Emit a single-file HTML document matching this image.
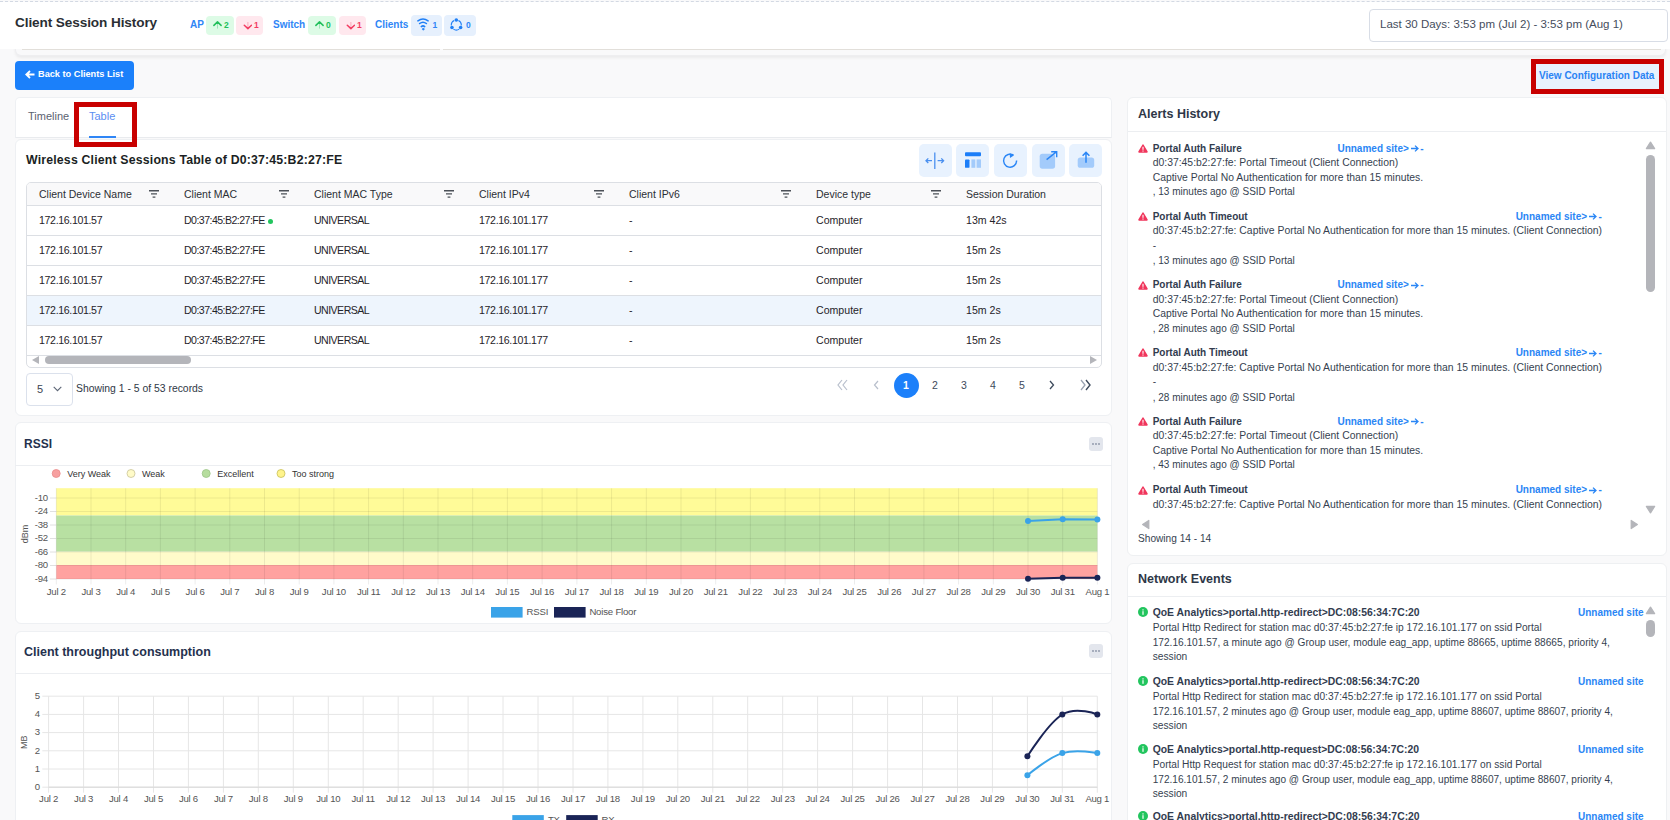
<!DOCTYPE html>
<html><head><meta charset="utf-8">
<style>
*{box-sizing:border-box;margin:0;padding:0}
html,body{width:1670px;height:820px;overflow:hidden}
body{background:#f9f9fa;font-family:"Liberation Sans",sans-serif;color:#212529;position:relative}
.a{position:absolute;white-space:nowrap}
.card{position:absolute;background:#fff;border-radius:6px;border:1px solid #eef0f3}
#topdash{left:0;top:1px;width:1670px;height:0;border-top:1px dashed #d3d9e3}
#hdr{left:0;top:2px;width:1670px;height:47px;background:#fff}
#hdrcard{left:15px;top:40px;width:1651px;height:15.5px;background:#f9f9fa;border:1px solid #eeeef0;border-top:none;border-radius:0 0 6px 6px;box-shadow:0 2px 3px rgba(0,0,0,.06)}
#hdrline{left:22px;top:49px;width:1639px;height:1px;background:#e2dfda}
.ttl{left:15px;top:15px;font-size:13.6px;line-height:16px;font-weight:bold;color:#2a2e33;letter-spacing:-0.1px}
.lbl{font-size:10px;font-weight:bold;color:#2f86f6;line-height:12px;margin-top:1.3px}
.bdg{position:absolute;height:19px;border-radius:4px;font-size:8.5px;font-weight:bold;line-height:19px}
.bg{background:#ddfbe6;color:#22bf5b}
.br{background:#ffe8ee;color:#f23d62}
.bb{background:#e6f0fd;color:#2f86f6;height:21px;line-height:21px}
.bdg svg{position:absolute}
.bdg span{position:absolute}
#date{left:1369px;top:9px;width:299px;height:33px;border:1px solid #d8dde6;border-radius:4px;background:#fff;font-size:11.5px;line-height:28px;padding-left:10px;color:#454d5c}
#back{left:15px;top:61px;width:119px;height:29px;background:#1b80fa;border-radius:4px;color:#fff;font-size:9.2px;font-weight:bold;line-height:27px}
#vcfg{left:1531px;top:59px;width:133px;height:35px;border:5px solid #c80000;background:#e8f1fd;color:#2a83f4;font-size:10px;font-weight:bold;line-height:23px;padding-left:3px}
.th{font-size:10.5px;line-height:13px;color:#2b2f35}
.td{font-size:10.6px;line-height:13px;color:#1f2329}
.cht{font-size:12px;line-height:15px;font-weight:bold;color:#25314e}
.dots{width:14px;height:14px;background:#e3e6ed;border-radius:3px}
.dots svg{position:absolute;left:0;top:0}
.rct{font-size:12.5px;line-height:15px;font-weight:bold;color:#2e3747}
.atl{font-size:10px;line-height:14px;font-weight:bold;color:#323c4f}
.alk{font-size:10px;line-height:14px;font-weight:bold;color:#2a86f5}
.atx{font-size:10.2px;line-height:14px;color:#363f50}
.rc{border:1px solid #eef0f2;box-shadow:none}
#redtab{left:74px;top:102px;width:63px;height:45px;border:5px solid #c80000;z-index:10}
</style></head>
<body>
<div id="hdrcard" class="a"></div>
<div id="hdr" class="a"></div>
<div id="hdrline" class="a"></div><div class="a" style="left:440px;top:49px;width:3px;height:2px;background:#fafafb"></div>
<div id="topdash" class="a"></div>
<div class="a ttl">Client Session History</div>

<div class="a lbl" style="left:190px;top:18px">AP</div>
<div class="bdg bg" style="left:206px;top:16px;width:28px"><svg style="left:7px;top:5px" width="9" height="9" viewBox="0 0 9 9"><path d="M4.5 1.5V7.6" stroke="#22bf5b" stroke-opacity="0.35" stroke-width="1" fill="none"/><path d="M0.9 4.4L4.5 0.9L8.1 4.4" stroke="#22bf5b" stroke-width="1.5" fill="none" stroke-linecap="round" stroke-linejoin="round"/></svg><span style="left:18px">2</span></div>
<div class="bdg br" style="left:236px;top:16px;width:27px"><svg style="left:7px;top:6px" width="9" height="9" viewBox="0 0 9 9"><path d="M4.9 0V6" stroke="#f23d62" stroke-opacity="0.35" stroke-width="1" fill="none"/><path d="M1.3 3.2L4.9 6.6L8.5 3.2" stroke="#f23d62" stroke-width="1.5" fill="none" stroke-linecap="round" stroke-linejoin="round"/></svg><span style="left:18px">1</span></div>
<div class="a lbl" style="left:273px;top:18px">Switch</div>
<div class="bdg bg" style="left:308px;top:16px;width:28px"><svg style="left:7px;top:5px" width="9" height="9" viewBox="0 0 9 9"><path d="M4.5 1.5V7.6" stroke="#22bf5b" stroke-opacity="0.35" stroke-width="1" fill="none"/><path d="M0.9 4.4L4.5 0.9L8.1 4.4" stroke="#22bf5b" stroke-width="1.5" fill="none" stroke-linecap="round" stroke-linejoin="round"/></svg><span style="left:18px">0</span></div>
<div class="bdg br" style="left:339px;top:16px;width:27px"><svg style="left:7px;top:6px" width="9" height="9" viewBox="0 0 9 9"><path d="M4.9 0V6" stroke="#f23d62" stroke-opacity="0.35" stroke-width="1" fill="none"/><path d="M1.3 3.2L4.9 6.6L8.5 3.2" stroke="#f23d62" stroke-width="1.5" fill="none" stroke-linecap="round" stroke-linejoin="round"/></svg><span style="left:18px">1</span></div>
<div class="a lbl" style="left:375px;top:18px">Clients</div>
<div class="bdg bb" style="left:411px;top:15px;width:31px"><svg style="left:6px;top:3px" width="12" height="14" viewBox="0 0 12 14"><path d="M0.9 2.9Q6 -0.8 11.1 2.9M2.6 5.5Q6 2.8 9.4 5.5M4.3 8.6Q6 7.1 7.7 8.6" stroke="#1f7ff6" stroke-width="1.5" fill="none" stroke-linecap="round"/><path d="M6.3 9.9L7.5 11.1L6.3 12.3L5.1 11.1Z" fill="#1f7ff6" stroke="#1f7ff6" stroke-width="0.6" stroke-linejoin="round"/></svg><span style="left:21.5px">1</span></div>
<div class="bdg bb" style="left:444px;top:15px;width:32px"><svg style="left:5px;top:0px" width="15" height="16" viewBox="0 0 15 16"><path d="M2.32 10.44A5 5 0 0 1 5.19 5.47M9.41 5.47A5 5 0 0 1 12.28 10.44M10.17 14.1A5 5 0 0 1 4.43 14.1" stroke="#1f7ff6" stroke-width="1.1" fill="none"/><circle cx="7.3" cy="5" r="1.8" fill="#1f7ff6"/><circle cx="2.97" cy="12.5" r="1.8" fill="#1f7ff6"/><circle cx="11.63" cy="12.5" r="1.8" fill="#1f7ff6"/></svg><span style="left:22px">0</span></div>

<div id="date" class="a">Last 30 Days: 3:53 pm (Jul 2) - 3:53 pm (Aug 1)</div>

<div id="back" class="a"><svg style="position:absolute;left:10px;top:9px" width="10" height="9" viewBox="0 0 10 9"><path d="M5 1L1.3 4.5L5 8M1.5 4.5H9.5" stroke="#fff" stroke-width="1.8" fill="none"/></svg><span style="position:absolute;left:23px">Back to Clients List</span></div>
<div id="vcfg" class="a">View Configuration Data</div>

<!-- TABS -->
<div class="card" style="left:15px;top:97px;width:1097px;height:41px;border-radius:5px 5px 0 0;border-bottom:1px solid #e9ebee"></div>
<div class="a" style="left:28px;top:110px;font-size:11px;line-height:12px;color:#5b6270">Timeline</div>
<div class="a" style="left:89px;top:110px;font-size:11px;line-height:12px;color:#5b8ef2">Table</div>
<div class="a" style="left:89px;top:136px;width:27px;height:2px;background:#2f86f6"></div>
<div id="redtab" class="a"></div>

<!--TABLECARD-->
<div class="card" style="left:15px;top:139px;width:1097px;height:277px"></div>
<div class="a" style="left:26px;top:153px;font-size:12.3px;line-height:15px;font-weight:bold;color:#1b1f24;letter-spacing:0.18px">Wireless Client Sessions Table of D0:37:45:B2:27:FE</div>
<div class="a" style="left:919px;top:144px;width:33px;height:33px;background:#e8f2fe;border-radius:5px"><svg style="position:absolute;left:6px;top:6px" width="20" height="20" viewBox="0 0 20 20"><path d="M9.8 2.6V18.9" stroke="#4a90f0" stroke-width="1.3"/><path d="M1 10.7H7M3.3 8.4L1 10.7L3.3 13M12.6 10.7H18.6M16.3 8.4L18.6 10.7L16.3 13" stroke="#4a90f0" stroke-width="1.3" fill="none"/></svg></div>
<div class="a" style="left:956px;top:144px;width:33px;height:33px;background:#e8f2fe;border-radius:5px"><svg style="position:absolute;left:6px;top:6px" width="20" height="20" viewBox="0 0 20 20"><rect x="3" y="2.3" width="16" height="3.9" rx="0.9" fill="#1c7ef8"/><rect x="3" y="9.4" width="4.5" height="8.4" rx="0.9" fill="#1c7ef8"/><rect x="9.4" y="9.4" width="3.9" height="8.4" fill="#a3cbfb"/><rect x="14.6" y="9.4" width="4.4" height="8.4" fill="#a3cbfb"/></svg></div>
<div class="a" style="left:994px;top:144px;width:33px;height:33px;background:#e8f2fe;border-radius:5px"><svg style="position:absolute;left:6px;top:6px" width="20" height="20" viewBox="0 0 20 20"><path d="M13.6 5.2A6.5 6.5 0 1 0 16.6 10.6" stroke="#2a86f6" stroke-width="1.4" fill="none"/><path d="M9.6 3L13.8 5.4L10 8.1Z" fill="#2a86f6"/></svg></div>
<div class="a" style="left:1032px;top:144px;width:33px;height:33px;background:#e8f2fe;border-radius:5px"><svg style="position:absolute;left:6px;top:6px" width="20" height="20" viewBox="0 0 20 20"><rect x="1.7" y="3.7" width="15.4" height="15" rx="2.6" fill="#a3cbfb"/><path d="M8.6 9.6L18.4 1.9M13.2 1.7H18.7V7.2" stroke="#2a86f6" stroke-width="1.4" fill="none"/></svg></div>
<div class="a" style="left:1069px;top:144px;width:33px;height:33px;background:#e8f2fe;border-radius:5px"><svg style="position:absolute;left:6px;top:6px" width="20" height="20" viewBox="0 0 20 20"><rect x="2.7" y="7.5" width="16.5" height="10.3" rx="2.6" fill="#a3cbfb"/><path d="M11 12.8V2.6M7.6 5.8L11 2.4L14.4 5.8" stroke="#2a86f6" stroke-width="1.5" fill="none"/></svg></div>
<div class="a" style="left:26px;top:182px;width:1076px;height:186px;border:1px solid #dcdfe4;border-radius:5px;overflow:hidden;background:#fff">
<div style="position:absolute;left:0;top:0;width:1076px;height:23px;background:#f9f9fa;border-bottom:1px solid #dcdfe4"></div>
<div style="position:absolute;left:0;top:23px;width:1076px;height:30px;background:#fff;border-bottom:1px solid #dcdfe4"></div>
<div style="position:absolute;left:0;top:53px;width:1076px;height:30px;background:#fff;border-bottom:1px solid #dcdfe4"></div>
<div style="position:absolute;left:0;top:83px;width:1076px;height:30px;background:#fff;border-bottom:1px solid #dcdfe4"></div>
<div style="position:absolute;left:0;top:113px;width:1076px;height:30px;background:#eef5fd;border-bottom:1px solid #dcdfe4"></div>
<div style="position:absolute;left:0;top:143px;width:1076px;height:30px;background:#fff;border-bottom:1px solid #dcdfe4"></div>
</div>
<div class="a th" style="left:39px;top:188px">Client Device Name</div>
<div class="a th" style="left:184px;top:188px">Client MAC</div>
<div class="a th" style="left:314px;top:188px">Client MAC Type</div>
<div class="a th" style="left:479px;top:188px">Client IPv4</div>
<div class="a th" style="left:629px;top:188px">Client IPv6</div>
<div class="a th" style="left:816px;top:188px">Device type</div>
<div class="a th" style="left:966px;top:188px">Session Duration</div>
<svg class="a" style="left:149px;top:190px" width="10" height="8" viewBox="0 0 10 8"><path d="M0 0.75H10M2 3.9H8M3.6 7.1H6.4" stroke="#4b5057" stroke-width="1.4"/></svg>
<svg class="a" style="left:279px;top:190px" width="10" height="8" viewBox="0 0 10 8"><path d="M0 0.75H10M2 3.9H8M3.6 7.1H6.4" stroke="#4b5057" stroke-width="1.4"/></svg>
<svg class="a" style="left:444px;top:190px" width="10" height="8" viewBox="0 0 10 8"><path d="M0 0.75H10M2 3.9H8M3.6 7.1H6.4" stroke="#4b5057" stroke-width="1.4"/></svg>
<svg class="a" style="left:594px;top:190px" width="10" height="8" viewBox="0 0 10 8"><path d="M0 0.75H10M2 3.9H8M3.6 7.1H6.4" stroke="#4b5057" stroke-width="1.4"/></svg>
<svg class="a" style="left:781px;top:190px" width="10" height="8" viewBox="0 0 10 8"><path d="M0 0.75H10M2 3.9H8M3.6 7.1H6.4" stroke="#4b5057" stroke-width="1.4"/></svg>
<svg class="a" style="left:931px;top:190px" width="10" height="8" viewBox="0 0 10 8"><path d="M0 0.75H10M2 3.9H8M3.6 7.1H6.4" stroke="#4b5057" stroke-width="1.4"/></svg>
<div class="a td" style="left:39px;top:214px;letter-spacing:-0.35px;">172.16.101.57</div>
<div class="a td" style="left:184px;top:214px;letter-spacing:-0.55px;">D0:37:45:B2:27:FE</div>
<div class="a td" style="left:314px;top:214px;letter-spacing:-0.55px;">UNIVERSAL</div>
<div class="a td" style="left:479px;top:214px;letter-spacing:-0.35px;">172.16.101.177</div>
<div class="a td" style="left:629px;top:214px;">-</div>
<div class="a td" style="left:816px;top:214px;">Computer</div>
<div class="a td" style="left:966px;top:214px;">13m 42s</div>
<div class="a td" style="left:39px;top:244px;letter-spacing:-0.35px;">172.16.101.57</div>
<div class="a td" style="left:184px;top:244px;letter-spacing:-0.55px;">D0:37:45:B2:27:FE</div>
<div class="a td" style="left:314px;top:244px;letter-spacing:-0.55px;">UNIVERSAL</div>
<div class="a td" style="left:479px;top:244px;letter-spacing:-0.35px;">172.16.101.177</div>
<div class="a td" style="left:629px;top:244px;">-</div>
<div class="a td" style="left:816px;top:244px;">Computer</div>
<div class="a td" style="left:966px;top:244px;">15m 2s</div>
<div class="a td" style="left:39px;top:274px;letter-spacing:-0.35px;">172.16.101.57</div>
<div class="a td" style="left:184px;top:274px;letter-spacing:-0.55px;">D0:37:45:B2:27:FE</div>
<div class="a td" style="left:314px;top:274px;letter-spacing:-0.55px;">UNIVERSAL</div>
<div class="a td" style="left:479px;top:274px;letter-spacing:-0.35px;">172.16.101.177</div>
<div class="a td" style="left:629px;top:274px;">-</div>
<div class="a td" style="left:816px;top:274px;">Computer</div>
<div class="a td" style="left:966px;top:274px;">15m 2s</div>
<div class="a td" style="left:39px;top:304px;letter-spacing:-0.35px;">172.16.101.57</div>
<div class="a td" style="left:184px;top:304px;letter-spacing:-0.55px;">D0:37:45:B2:27:FE</div>
<div class="a td" style="left:314px;top:304px;letter-spacing:-0.55px;">UNIVERSAL</div>
<div class="a td" style="left:479px;top:304px;letter-spacing:-0.35px;">172.16.101.177</div>
<div class="a td" style="left:629px;top:304px;">-</div>
<div class="a td" style="left:816px;top:304px;">Computer</div>
<div class="a td" style="left:966px;top:304px;">15m 2s</div>
<div class="a td" style="left:39px;top:334px;letter-spacing:-0.35px;">172.16.101.57</div>
<div class="a td" style="left:184px;top:334px;letter-spacing:-0.55px;">D0:37:45:B2:27:FE</div>
<div class="a td" style="left:314px;top:334px;letter-spacing:-0.55px;">UNIVERSAL</div>
<div class="a td" style="left:479px;top:334px;letter-spacing:-0.35px;">172.16.101.177</div>
<div class="a td" style="left:629px;top:334px;">-</div>
<div class="a td" style="left:816px;top:334px;">Computer</div>
<div class="a td" style="left:966px;top:334px;">15m 2s</div>
<div class="a" style="left:268px;top:218.5px;width:5px;height:5px;border-radius:50%;background:#22c55e"></div>
<div class="a" style="left:45px;top:356px;width:146px;height:8px;border-radius:4px;background:#b4b5ba"></div>
<svg class="a" style="left:31px;top:355px" width="9" height="10" viewBox="0 0 9 10"><path d="M1 5L8 1V9Z" fill="#b4b5ba"/></svg>
<svg class="a" style="left:1089px;top:355px" width="9" height="10" viewBox="0 0 9 10"><path d="M8 5L1 1V9Z" fill="#b4b5ba"/></svg>
<div class="a" style="left:26px;top:373px;width:47px;height:33px;border:1px solid #dbe1ec;border-radius:4px;background:#fff"></div>
<div class="a" style="left:37px;top:383px;font-size:11px;line-height:13px;color:#3b4452">5</div>
<svg class="a" style="left:53px;top:386px" width="9" height="6" viewBox="0 0 9 6"><path d="M0.7 0.8L4.5 4.6L8.3 0.8" stroke="#5d6676" stroke-width="1.1" fill="none"/></svg>
<div class="a" style="left:76px;top:382px;font-size:10.4px;line-height:13px;color:#2f3846">Showing 1 - 5 of 53 records</div>
<div class="a" style="left:894px;top:373px;width:25px;height:25px;border-radius:50%;background:#1c80fa"></div>
<div class="a" style="left:896px;top:379px;width:20px;text-align:center;font-size:10.5px;line-height:13px;color:#fff;font-weight:bold;">1</div>
<div class="a" style="left:925px;top:379px;width:20px;text-align:center;font-size:10.5px;line-height:13px;color:#3d4a5c;">2</div>
<div class="a" style="left:954px;top:379px;width:20px;text-align:center;font-size:10.5px;line-height:13px;color:#3d4a5c;">3</div>
<div class="a" style="left:983px;top:379px;width:20px;text-align:center;font-size:10.5px;line-height:13px;color:#3d4a5c;">4</div>
<div class="a" style="left:1012px;top:379px;width:20px;text-align:center;font-size:10.5px;line-height:13px;color:#3d4a5c;">5</div>
<svg class="a" style="left:836px;top:379px" width="14" height="12" viewBox="0 0 14 12"><path d="M6 1L2 6L6 11M11 1L7 6L11 11" stroke="#b8bfcc" stroke-width="1.2" fill="none"/></svg>
<svg class="a" style="left:872px;top:379px" width="8" height="12" viewBox="0 0 8 12"><path d="M6 2L2.5 6L6 10" stroke="#b8bfcc" stroke-width="1.2" fill="none"/></svg>
<svg class="a" style="left:1048px;top:379px" width="8" height="12" viewBox="0 0 8 12"><path d="M2 2L5.5 6L2 10" stroke="#3d4a5c" stroke-width="1.3" fill="none"/></svg>
<svg class="a" style="left:1078px;top:379px" width="14" height="12" viewBox="0 0 14 12"><path d="M3 1L7 6L3 11" stroke="#9aa3b2" stroke-width="1.3" fill="none"/><path d="M8 1L12 6L8 11" stroke="#3d4a5c" stroke-width="1.4" fill="none"/></svg>
<!--/TABLECARD-->

<!--RSSI-->
<div class="card" style="left:15px;top:422px;width:1097px;height:202px"></div>
<div class="a" style="left:15px;top:465px;width:1097px;height:1px;background:#eceef1"></div>
<div class="a cht" style="left:24px;top:437px">RSSI</div>
<div class="a dots" style="left:1089px;top:437px"><svg width="14" height="14" viewBox="0 0 14 14"><circle cx="4" cy="7" r="0.9" fill="#8a93a6"/><circle cx="7" cy="7" r="0.9" fill="#8a93a6"/><circle cx="10" cy="7" r="0.9" fill="#8a93a6"/></svg></div>
<svg class="a" style="left:0;top:420px" width="1120" height="210" viewBox="0 420 1120 210" font-family="Liberation Sans" >
<circle cx="56.2" cy="473.5" r="4" fill="#f7a0a0" stroke="#e88a8a" stroke-width="0.8"/>
<text x="67.2" y="476.8" font-size="9" fill="#333">Very Weak</text>
<circle cx="131" cy="473.5" r="4" fill="#fffbc8" stroke="#c9c49a" stroke-width="0.8"/>
<text x="142" y="476.8" font-size="9" fill="#333">Weak</text>
<circle cx="206.2" cy="473.5" r="4" fill="#b6dd9e" stroke="#9cc486" stroke-width="0.8"/>
<text x="217.2" y="476.8" font-size="9" fill="#333">Excellent</text>
<circle cx="281" cy="473.5" r="4" fill="#fff48c" stroke="#c8bf5a" stroke-width="0.8"/>
<text x="292" y="476.8" font-size="9" fill="#333">Too strong</text>
<rect x="56.3" y="488.2" width="1041.1000000000001" height="27.3" fill="#fffb98"/>
<rect x="56.3" y="515.5" width="1041.1000000000001" height="36.2" fill="#b8e0a2"/>
<rect x="56.3" y="551.7" width="1041.1000000000001" height="13.3" fill="#fffbca"/>
<rect x="56.3" y="565" width="1041.1000000000001" height="14" fill="#ffa2a0"/>
<line x1="56.3" x2="1097.4" y1="498" y2="498" stroke="rgba(0,0,0,0.07)" stroke-width="1"/>
<line x1="50" x2="56.3" y1="498" y2="498" stroke="#e0e0e0" stroke-width="1"/>
<text x="48" y="500.7" font-size="9.6" letter-spacing="-0.2" fill="#555" text-anchor="end">-10</text>
<line x1="56.3" x2="1097.4" y1="511.5" y2="511.5" stroke="rgba(0,0,0,0.07)" stroke-width="1"/>
<line x1="50" x2="56.3" y1="511.5" y2="511.5" stroke="#e0e0e0" stroke-width="1"/>
<text x="48" y="514.2" font-size="9.6" letter-spacing="-0.2" fill="#555" text-anchor="end">-24</text>
<line x1="56.3" x2="1097.4" y1="525" y2="525" stroke="rgba(0,0,0,0.07)" stroke-width="1"/>
<line x1="50" x2="56.3" y1="525" y2="525" stroke="#e0e0e0" stroke-width="1"/>
<text x="48" y="527.7" font-size="9.6" letter-spacing="-0.2" fill="#555" text-anchor="end">-38</text>
<line x1="56.3" x2="1097.4" y1="538.5" y2="538.5" stroke="rgba(0,0,0,0.07)" stroke-width="1"/>
<line x1="50" x2="56.3" y1="538.5" y2="538.5" stroke="#e0e0e0" stroke-width="1"/>
<text x="48" y="541.2" font-size="9.6" letter-spacing="-0.2" fill="#555" text-anchor="end">-52</text>
<line x1="56.3" x2="1097.4" y1="552" y2="552" stroke="rgba(0,0,0,0.07)" stroke-width="1"/>
<line x1="50" x2="56.3" y1="552" y2="552" stroke="#e0e0e0" stroke-width="1"/>
<text x="48" y="554.7" font-size="9.6" letter-spacing="-0.2" fill="#555" text-anchor="end">-66</text>
<line x1="56.3" x2="1097.4" y1="565.5" y2="565.5" stroke="rgba(0,0,0,0.07)" stroke-width="1"/>
<line x1="50" x2="56.3" y1="565.5" y2="565.5" stroke="#e0e0e0" stroke-width="1"/>
<text x="48" y="568.2" font-size="9.6" letter-spacing="-0.2" fill="#555" text-anchor="end">-80</text>
<line x1="56.3" x2="1097.4" y1="579" y2="579" stroke="rgba(0,0,0,0.07)" stroke-width="1"/>
<line x1="50" x2="56.3" y1="579" y2="579" stroke="#e0e0e0" stroke-width="1"/>
<text x="48" y="581.7" font-size="9.6" letter-spacing="-0.2" fill="#555" text-anchor="end">-94</text>
<line x1="56.3" x2="56.3" y1="488.2" y2="584.5" stroke="rgba(0,0,0,0.075)" stroke-width="1"/>
<text x="56.3" y="594.5" font-size="9.6" letter-spacing="-0.25" fill="#555" text-anchor="middle">Jul 2</text>
<line x1="91.0" x2="91.0" y1="488.2" y2="584.5" stroke="rgba(0,0,0,0.075)" stroke-width="1"/>
<text x="91.0" y="594.5" font-size="9.6" letter-spacing="-0.25" fill="#555" text-anchor="middle">Jul 3</text>
<line x1="125.7" x2="125.7" y1="488.2" y2="584.5" stroke="rgba(0,0,0,0.075)" stroke-width="1"/>
<text x="125.7" y="594.5" font-size="9.6" letter-spacing="-0.25" fill="#555" text-anchor="middle">Jul 4</text>
<line x1="160.4" x2="160.4" y1="488.2" y2="584.5" stroke="rgba(0,0,0,0.075)" stroke-width="1"/>
<text x="160.4" y="594.5" font-size="9.6" letter-spacing="-0.25" fill="#555" text-anchor="middle">Jul 5</text>
<line x1="195.1" x2="195.1" y1="488.2" y2="584.5" stroke="rgba(0,0,0,0.075)" stroke-width="1"/>
<text x="195.1" y="594.5" font-size="9.6" letter-spacing="-0.25" fill="#555" text-anchor="middle">Jul 6</text>
<line x1="229.8" x2="229.8" y1="488.2" y2="584.5" stroke="rgba(0,0,0,0.075)" stroke-width="1"/>
<text x="229.8" y="594.5" font-size="9.6" letter-spacing="-0.25" fill="#555" text-anchor="middle">Jul 7</text>
<line x1="264.5" x2="264.5" y1="488.2" y2="584.5" stroke="rgba(0,0,0,0.075)" stroke-width="1"/>
<text x="264.5" y="594.5" font-size="9.6" letter-spacing="-0.25" fill="#555" text-anchor="middle">Jul 8</text>
<line x1="299.2" x2="299.2" y1="488.2" y2="584.5" stroke="rgba(0,0,0,0.075)" stroke-width="1"/>
<text x="299.2" y="594.5" font-size="9.6" letter-spacing="-0.25" fill="#555" text-anchor="middle">Jul 9</text>
<line x1="333.9" x2="333.9" y1="488.2" y2="584.5" stroke="rgba(0,0,0,0.075)" stroke-width="1"/>
<text x="333.9" y="594.5" font-size="9.6" letter-spacing="-0.25" fill="#555" text-anchor="middle">Jul 10</text>
<line x1="368.6" x2="368.6" y1="488.2" y2="584.5" stroke="rgba(0,0,0,0.075)" stroke-width="1"/>
<text x="368.6" y="594.5" font-size="9.6" letter-spacing="-0.25" fill="#555" text-anchor="middle">Jul 11</text>
<line x1="403.3" x2="403.3" y1="488.2" y2="584.5" stroke="rgba(0,0,0,0.075)" stroke-width="1"/>
<text x="403.3" y="594.5" font-size="9.6" letter-spacing="-0.25" fill="#555" text-anchor="middle">Jul 12</text>
<line x1="438.0" x2="438.0" y1="488.2" y2="584.5" stroke="rgba(0,0,0,0.075)" stroke-width="1"/>
<text x="438.0" y="594.5" font-size="9.6" letter-spacing="-0.25" fill="#555" text-anchor="middle">Jul 13</text>
<line x1="472.7" x2="472.7" y1="488.2" y2="584.5" stroke="rgba(0,0,0,0.075)" stroke-width="1"/>
<text x="472.7" y="594.5" font-size="9.6" letter-spacing="-0.25" fill="#555" text-anchor="middle">Jul 14</text>
<line x1="507.4" x2="507.4" y1="488.2" y2="584.5" stroke="rgba(0,0,0,0.075)" stroke-width="1"/>
<text x="507.4" y="594.5" font-size="9.6" letter-spacing="-0.25" fill="#555" text-anchor="middle">Jul 15</text>
<line x1="542.1" x2="542.1" y1="488.2" y2="584.5" stroke="rgba(0,0,0,0.075)" stroke-width="1"/>
<text x="542.1" y="594.5" font-size="9.6" letter-spacing="-0.25" fill="#555" text-anchor="middle">Jul 16</text>
<line x1="576.9" x2="576.9" y1="488.2" y2="584.5" stroke="rgba(0,0,0,0.075)" stroke-width="1"/>
<text x="576.9" y="594.5" font-size="9.6" letter-spacing="-0.25" fill="#555" text-anchor="middle">Jul 17</text>
<line x1="611.6" x2="611.6" y1="488.2" y2="584.5" stroke="rgba(0,0,0,0.075)" stroke-width="1"/>
<text x="611.6" y="594.5" font-size="9.6" letter-spacing="-0.25" fill="#555" text-anchor="middle">Jul 18</text>
<line x1="646.3" x2="646.3" y1="488.2" y2="584.5" stroke="rgba(0,0,0,0.075)" stroke-width="1"/>
<text x="646.3" y="594.5" font-size="9.6" letter-spacing="-0.25" fill="#555" text-anchor="middle">Jul 19</text>
<line x1="681.0" x2="681.0" y1="488.2" y2="584.5" stroke="rgba(0,0,0,0.075)" stroke-width="1"/>
<text x="681.0" y="594.5" font-size="9.6" letter-spacing="-0.25" fill="#555" text-anchor="middle">Jul 20</text>
<line x1="715.7" x2="715.7" y1="488.2" y2="584.5" stroke="rgba(0,0,0,0.075)" stroke-width="1"/>
<text x="715.7" y="594.5" font-size="9.6" letter-spacing="-0.25" fill="#555" text-anchor="middle">Jul 21</text>
<line x1="750.4" x2="750.4" y1="488.2" y2="584.5" stroke="rgba(0,0,0,0.075)" stroke-width="1"/>
<text x="750.4" y="594.5" font-size="9.6" letter-spacing="-0.25" fill="#555" text-anchor="middle">Jul 22</text>
<line x1="785.1" x2="785.1" y1="488.2" y2="584.5" stroke="rgba(0,0,0,0.075)" stroke-width="1"/>
<text x="785.1" y="594.5" font-size="9.6" letter-spacing="-0.25" fill="#555" text-anchor="middle">Jul 23</text>
<line x1="819.8" x2="819.8" y1="488.2" y2="584.5" stroke="rgba(0,0,0,0.075)" stroke-width="1"/>
<text x="819.8" y="594.5" font-size="9.6" letter-spacing="-0.25" fill="#555" text-anchor="middle">Jul 24</text>
<line x1="854.5" x2="854.5" y1="488.2" y2="584.5" stroke="rgba(0,0,0,0.075)" stroke-width="1"/>
<text x="854.5" y="594.5" font-size="9.6" letter-spacing="-0.25" fill="#555" text-anchor="middle">Jul 25</text>
<line x1="889.2" x2="889.2" y1="488.2" y2="584.5" stroke="rgba(0,0,0,0.075)" stroke-width="1"/>
<text x="889.2" y="594.5" font-size="9.6" letter-spacing="-0.25" fill="#555" text-anchor="middle">Jul 26</text>
<line x1="923.9" x2="923.9" y1="488.2" y2="584.5" stroke="rgba(0,0,0,0.075)" stroke-width="1"/>
<text x="923.9" y="594.5" font-size="9.6" letter-spacing="-0.25" fill="#555" text-anchor="middle">Jul 27</text>
<line x1="958.6" x2="958.6" y1="488.2" y2="584.5" stroke="rgba(0,0,0,0.075)" stroke-width="1"/>
<text x="958.6" y="594.5" font-size="9.6" letter-spacing="-0.25" fill="#555" text-anchor="middle">Jul 28</text>
<line x1="993.3" x2="993.3" y1="488.2" y2="584.5" stroke="rgba(0,0,0,0.075)" stroke-width="1"/>
<text x="993.3" y="594.5" font-size="9.6" letter-spacing="-0.25" fill="#555" text-anchor="middle">Jul 29</text>
<line x1="1028.0" x2="1028.0" y1="488.2" y2="584.5" stroke="rgba(0,0,0,0.075)" stroke-width="1"/>
<text x="1028.0" y="594.5" font-size="9.6" letter-spacing="-0.25" fill="#555" text-anchor="middle">Jul 30</text>
<line x1="1062.7" x2="1062.7" y1="488.2" y2="584.5" stroke="rgba(0,0,0,0.075)" stroke-width="1"/>
<text x="1062.7" y="594.5" font-size="9.6" letter-spacing="-0.25" fill="#555" text-anchor="middle">Jul 31</text>
<line x1="1097.4" x2="1097.4" y1="488.2" y2="584.5" stroke="rgba(0,0,0,0.075)" stroke-width="1"/>
<text x="1097.4" y="594.5" font-size="9.6" letter-spacing="-0.25" fill="#555" text-anchor="middle">Aug 1</text>
<text transform="translate(27.5,534) rotate(-90)" font-size="9" fill="#555" text-anchor="middle">dBm</text>
<polyline points="1028.0,521 1062.7,519.3 1097.4,519.4" stroke="#3aa3e8" stroke-width="2" fill="none"/>
<circle cx="1028.0" cy="521" r="3" fill="#3aa3e8"/>
<circle cx="1062.7" cy="519.3" r="3" fill="#3aa3e8"/>
<circle cx="1097.4" cy="519.4" r="3" fill="#3aa3e8"/>
<polyline points="1028.0,578.7 1062.7,577.7 1097.4,577.7" stroke="#1a2456" stroke-width="2" fill="none"/>
<circle cx="1028.0" cy="578.7" r="3" fill="#1a2456"/>
<circle cx="1062.7" cy="577.7" r="3" fill="#1a2456"/>
<circle cx="1097.4" cy="577.7" r="3" fill="#1a2456"/>
<rect x="491" y="607" width="31.6" height="10.6" fill="#3aa3e8"/><text x="526.6" y="614.8" font-size="9.6" letter-spacing="-0.2" fill="#555">RSSI</text>
<rect x="554" y="607" width="31.6" height="10.6" fill="#1a2456"/><text x="589.4" y="614.8" font-size="9.6" letter-spacing="-0.2" fill="#555">Noise Floor</text>
</svg>
<div class="card" style="left:15px;top:631px;width:1097px;height:200px"></div>
<div class="a" style="left:15px;top:673px;width:1097px;height:1px;background:#eceef1"></div>
<div class="a cht" style="left:24px;top:644.5px;font-size:12.5px">Client throughput consumption</div>
<div class="a dots" style="left:1089px;top:644px"><svg width="14" height="14" viewBox="0 0 14 14"><circle cx="4" cy="7" r="0.9" fill="#8a93a6"/><circle cx="7" cy="7" r="0.9" fill="#8a93a6"/><circle cx="10" cy="7" r="0.9" fill="#8a93a6"/></svg></div>
<svg class="a" style="left:0;top:630px" width="1120" height="190" viewBox="0 630 1120 190" font-family="Liberation Sans">
<line x1="42.3" x2="1097.3" y1="696.2" y2="696.2" stroke="#e6e6e6" stroke-width="1"/>
<text x="39.8" y="698.9" font-size="9.6" letter-spacing="-0.2" fill="#555" text-anchor="end">5</text>
<line x1="42.3" x2="1097.3" y1="714.4" y2="714.4" stroke="#e6e6e6" stroke-width="1"/>
<text x="39.8" y="717.1" font-size="9.6" letter-spacing="-0.2" fill="#555" text-anchor="end">4</text>
<line x1="42.3" x2="1097.3" y1="732.6" y2="732.6" stroke="#e6e6e6" stroke-width="1"/>
<text x="39.8" y="735.3" font-size="9.6" letter-spacing="-0.2" fill="#555" text-anchor="end">3</text>
<line x1="42.3" x2="1097.3" y1="750.8" y2="750.8" stroke="#e6e6e6" stroke-width="1"/>
<text x="39.8" y="753.5" font-size="9.6" letter-spacing="-0.2" fill="#555" text-anchor="end">2</text>
<line x1="42.3" x2="1097.3" y1="769.0" y2="769.0" stroke="#e6e6e6" stroke-width="1"/>
<text x="39.8" y="771.7" font-size="9.6" letter-spacing="-0.2" fill="#555" text-anchor="end">1</text>
<line x1="42.3" x2="1097.3" y1="787.2" y2="787.2" stroke="#e6e6e6" stroke-width="1"/>
<text x="39.8" y="789.9" font-size="9.6" letter-spacing="-0.2" fill="#555" text-anchor="end">0</text>
<line x1="48.6" x2="48.6" y1="696.2" y2="792.7" stroke="#e6e6e6" stroke-width="1"/>
<text x="48.6" y="802.2" font-size="9.6" letter-spacing="-0.25" fill="#555" text-anchor="middle">Jul 2</text>
<line x1="83.6" x2="83.6" y1="696.2" y2="792.7" stroke="#e6e6e6" stroke-width="1"/>
<text x="83.6" y="802.2" font-size="9.6" letter-spacing="-0.25" fill="#555" text-anchor="middle">Jul 3</text>
<line x1="118.5" x2="118.5" y1="696.2" y2="792.7" stroke="#e6e6e6" stroke-width="1"/>
<text x="118.5" y="802.2" font-size="9.6" letter-spacing="-0.25" fill="#555" text-anchor="middle">Jul 4</text>
<line x1="153.5" x2="153.5" y1="696.2" y2="792.7" stroke="#e6e6e6" stroke-width="1"/>
<text x="153.5" y="802.2" font-size="9.6" letter-spacing="-0.25" fill="#555" text-anchor="middle">Jul 5</text>
<line x1="188.4" x2="188.4" y1="696.2" y2="792.7" stroke="#e6e6e6" stroke-width="1"/>
<text x="188.4" y="802.2" font-size="9.6" letter-spacing="-0.25" fill="#555" text-anchor="middle">Jul 6</text>
<line x1="223.4" x2="223.4" y1="696.2" y2="792.7" stroke="#e6e6e6" stroke-width="1"/>
<text x="223.4" y="802.2" font-size="9.6" letter-spacing="-0.25" fill="#555" text-anchor="middle">Jul 7</text>
<line x1="258.3" x2="258.3" y1="696.2" y2="792.7" stroke="#e6e6e6" stroke-width="1"/>
<text x="258.3" y="802.2" font-size="9.6" letter-spacing="-0.25" fill="#555" text-anchor="middle">Jul 8</text>
<line x1="293.3" x2="293.3" y1="696.2" y2="792.7" stroke="#e6e6e6" stroke-width="1"/>
<text x="293.3" y="802.2" font-size="9.6" letter-spacing="-0.25" fill="#555" text-anchor="middle">Jul 9</text>
<line x1="328.3" x2="328.3" y1="696.2" y2="792.7" stroke="#e6e6e6" stroke-width="1"/>
<text x="328.3" y="802.2" font-size="9.6" letter-spacing="-0.25" fill="#555" text-anchor="middle">Jul 10</text>
<line x1="363.2" x2="363.2" y1="696.2" y2="792.7" stroke="#e6e6e6" stroke-width="1"/>
<text x="363.2" y="802.2" font-size="9.6" letter-spacing="-0.25" fill="#555" text-anchor="middle">Jul 11</text>
<line x1="398.2" x2="398.2" y1="696.2" y2="792.7" stroke="#e6e6e6" stroke-width="1"/>
<text x="398.2" y="802.2" font-size="9.6" letter-spacing="-0.25" fill="#555" text-anchor="middle">Jul 12</text>
<line x1="433.1" x2="433.1" y1="696.2" y2="792.7" stroke="#e6e6e6" stroke-width="1"/>
<text x="433.1" y="802.2" font-size="9.6" letter-spacing="-0.25" fill="#555" text-anchor="middle">Jul 13</text>
<line x1="468.1" x2="468.1" y1="696.2" y2="792.7" stroke="#e6e6e6" stroke-width="1"/>
<text x="468.1" y="802.2" font-size="9.6" letter-spacing="-0.25" fill="#555" text-anchor="middle">Jul 14</text>
<line x1="503.0" x2="503.0" y1="696.2" y2="792.7" stroke="#e6e6e6" stroke-width="1"/>
<text x="503.0" y="802.2" font-size="9.6" letter-spacing="-0.25" fill="#555" text-anchor="middle">Jul 15</text>
<line x1="538.0" x2="538.0" y1="696.2" y2="792.7" stroke="#e6e6e6" stroke-width="1"/>
<text x="538.0" y="802.2" font-size="9.6" letter-spacing="-0.25" fill="#555" text-anchor="middle">Jul 16</text>
<line x1="573.0" x2="573.0" y1="696.2" y2="792.7" stroke="#e6e6e6" stroke-width="1"/>
<text x="573.0" y="802.2" font-size="9.6" letter-spacing="-0.25" fill="#555" text-anchor="middle">Jul 17</text>
<line x1="607.9" x2="607.9" y1="696.2" y2="792.7" stroke="#e6e6e6" stroke-width="1"/>
<text x="607.9" y="802.2" font-size="9.6" letter-spacing="-0.25" fill="#555" text-anchor="middle">Jul 18</text>
<line x1="642.9" x2="642.9" y1="696.2" y2="792.7" stroke="#e6e6e6" stroke-width="1"/>
<text x="642.9" y="802.2" font-size="9.6" letter-spacing="-0.25" fill="#555" text-anchor="middle">Jul 19</text>
<line x1="677.8" x2="677.8" y1="696.2" y2="792.7" stroke="#e6e6e6" stroke-width="1"/>
<text x="677.8" y="802.2" font-size="9.6" letter-spacing="-0.25" fill="#555" text-anchor="middle">Jul 20</text>
<line x1="712.8" x2="712.8" y1="696.2" y2="792.7" stroke="#e6e6e6" stroke-width="1"/>
<text x="712.8" y="802.2" font-size="9.6" letter-spacing="-0.25" fill="#555" text-anchor="middle">Jul 21</text>
<line x1="747.7" x2="747.7" y1="696.2" y2="792.7" stroke="#e6e6e6" stroke-width="1"/>
<text x="747.7" y="802.2" font-size="9.6" letter-spacing="-0.25" fill="#555" text-anchor="middle">Jul 22</text>
<line x1="782.7" x2="782.7" y1="696.2" y2="792.7" stroke="#e6e6e6" stroke-width="1"/>
<text x="782.7" y="802.2" font-size="9.6" letter-spacing="-0.25" fill="#555" text-anchor="middle">Jul 23</text>
<line x1="817.6" x2="817.6" y1="696.2" y2="792.7" stroke="#e6e6e6" stroke-width="1"/>
<text x="817.6" y="802.2" font-size="9.6" letter-spacing="-0.25" fill="#555" text-anchor="middle">Jul 24</text>
<line x1="852.6" x2="852.6" y1="696.2" y2="792.7" stroke="#e6e6e6" stroke-width="1"/>
<text x="852.6" y="802.2" font-size="9.6" letter-spacing="-0.25" fill="#555" text-anchor="middle">Jul 25</text>
<line x1="887.6" x2="887.6" y1="696.2" y2="792.7" stroke="#e6e6e6" stroke-width="1"/>
<text x="887.6" y="802.2" font-size="9.6" letter-spacing="-0.25" fill="#555" text-anchor="middle">Jul 26</text>
<line x1="922.5" x2="922.5" y1="696.2" y2="792.7" stroke="#e6e6e6" stroke-width="1"/>
<text x="922.5" y="802.2" font-size="9.6" letter-spacing="-0.25" fill="#555" text-anchor="middle">Jul 27</text>
<line x1="957.5" x2="957.5" y1="696.2" y2="792.7" stroke="#e6e6e6" stroke-width="1"/>
<text x="957.5" y="802.2" font-size="9.6" letter-spacing="-0.25" fill="#555" text-anchor="middle">Jul 28</text>
<line x1="992.4" x2="992.4" y1="696.2" y2="792.7" stroke="#e6e6e6" stroke-width="1"/>
<text x="992.4" y="802.2" font-size="9.6" letter-spacing="-0.25" fill="#555" text-anchor="middle">Jul 29</text>
<line x1="1027.4" x2="1027.4" y1="696.2" y2="792.7" stroke="#e6e6e6" stroke-width="1"/>
<text x="1027.4" y="802.2" font-size="9.6" letter-spacing="-0.25" fill="#555" text-anchor="middle">Jul 30</text>
<line x1="1062.3" x2="1062.3" y1="696.2" y2="792.7" stroke="#e6e6e6" stroke-width="1"/>
<text x="1062.3" y="802.2" font-size="9.6" letter-spacing="-0.25" fill="#555" text-anchor="middle">Jul 31</text>
<line x1="1097.3" x2="1097.3" y1="696.2" y2="792.7" stroke="#e6e6e6" stroke-width="1"/>
<text x="1097.3" y="802.2" font-size="9.6" letter-spacing="-0.25" fill="#555" text-anchor="middle">Aug 1</text>
<line x1="48.6" x2="1097.3" y1="787.2" y2="787.2" stroke="#d8d8d8" stroke-width="1"/>
<text transform="translate(27,742.3) rotate(-90)" font-size="9" fill="#555" text-anchor="middle">MB</text>
<path d="M1027.4,775.3 C1027.4,775.3 1048.4,757.5 1062.3,753.1 C1076.3,748.7 1097.3,753.1 1097.3,753.1" stroke="#3aa3e8" stroke-width="2" fill="none"/>
<path d="M1027.4,756.3 C1027.4,756.3 1048.4,722.9 1062.3,714.5 C1076.3,706.1 1097.3,714.5 1097.3,714.5" stroke="#1a2456" stroke-width="2" fill="none"/>
<circle cx="1027.4" cy="775.3" r="3" fill="#3aa3e8"/>
<circle cx="1062.3" cy="753.1" r="3" fill="#3aa3e8"/>
<circle cx="1097.3" cy="753.1" r="3" fill="#3aa3e8"/>
<circle cx="1027.4" cy="756.3" r="3" fill="#1a2456"/>
<circle cx="1062.3" cy="714.5" r="3" fill="#1a2456"/>
<circle cx="1097.3" cy="714.5" r="3" fill="#1a2456"/>
<rect x="512.3" y="815.1" width="31.5" height="10.6" fill="#3aa3e8"/><text x="547.9" y="822.9" font-size="9.6" letter-spacing="-0.2" fill="#555">TX</text>
<rect x="566.2" y="815.1" width="31.5" height="10.6" fill="#1a2456"/><text x="601.5" y="822.9" font-size="9.6" letter-spacing="-0.2" fill="#555">RX</text>
</svg>
<!--ALERTS-->
<div class="card rc" style="left:1127px;top:97px;width:540px;height:459px"></div>
<div class="a" style="left:1128px;top:131px;width:538px;height:1px;background:#eceef1"></div>
<div class="a rct" style="left:1138px;top:107px">Alerts History</div>
<div class="a" style="left:1128px;top:138px;width:510px;height:374px;overflow:hidden">
<svg class="a" style="left:10px;top:5.9px" width="10" height="9" viewBox="0 0 10 9"><path d="M5 0.3Q5.5 0.3 5.8 0.9L9.7 7.6Q10 8.6 9 8.7H1Q0 8.6 0.3 7.6L4.2 0.9Q4.5 0.3 5 0.3Z" fill="#f0365c"/><rect x="4.45" y="2.8" width="1.1" height="3" fill="#fff"/><rect x="4.45" y="6.5" width="1.1" height="1.1" fill="#fff"/></svg>
<div class="a atl" style="left:24.7px;top:3.5px">Portal Auth Failure</div>
<div class="a alk" style="left:95.7px;width:200px;text-align:right;top:3.5px">Unnamed site&gt;<svg style="display:inline-block;vertical-align:-0.5px;margin:0 1.5px 0 2px" width="8" height="7" viewBox="0 0 8 7"><path d="M0 3.5H7M4 0.6L7 3.5L4 6.4" stroke="#2a86f5" stroke-width="1.3" fill="none"/></svg>-</div>
<div class="a atx" style="left:24.7px;top:17.8px;font-size:10.4px">d0:37:45:b2:27:fe: Portal Timeout (Client Connection)</div>
<div class="a atx" style="left:24.7px;top:32.5px;font-size:10.38px">Captive Portal No Authentication for more than 15 minutes.</div>
<div class="a atx" style="left:24.7px;top:47.1px;font-size:10.03px">, 13 minutes ago @ SSID Portal</div>
<svg class="a" style="left:10px;top:73.9px" width="10" height="9" viewBox="0 0 10 9"><path d="M5 0.3Q5.5 0.3 5.8 0.9L9.7 7.6Q10 8.6 9 8.7H1Q0 8.6 0.3 7.6L4.2 0.9Q4.5 0.3 5 0.3Z" fill="#f0365c"/><rect x="4.45" y="2.8" width="1.1" height="3" fill="#fff"/><rect x="4.45" y="6.5" width="1.1" height="1.1" fill="#fff"/></svg>
<div class="a atl" style="left:24.7px;top:71.5px">Portal Auth Timeout</div>
<div class="a alk" style="left:273.9px;width:200px;text-align:right;top:71.5px">Unnamed site&gt;<svg style="display:inline-block;vertical-align:-0.5px;margin:0 1.5px 0 2px" width="8" height="7" viewBox="0 0 8 7"><path d="M0 3.5H7M4 0.6L7 3.5L4 6.4" stroke="#2a86f5" stroke-width="1.3" fill="none"/></svg>-</div>
<div class="a atx" style="left:24.7px;top:86.0px;font-size:10.4px">d0:37:45:b2:27:fe: Captive Portal No Authentication for more than 15 minutes. (Client Connection)</div>
<div class="a atx" style="left:24.7px;top:100.7px;font-size:10.2px">-</div>
<div class="a atx" style="left:24.7px;top:116.0px;font-size:10.03px">, 13 minutes ago @ SSID Portal</div>
<svg class="a" style="left:10px;top:142.8px" width="10" height="9" viewBox="0 0 10 9"><path d="M5 0.3Q5.5 0.3 5.8 0.9L9.7 7.6Q10 8.6 9 8.7H1Q0 8.6 0.3 7.6L4.2 0.9Q4.5 0.3 5 0.3Z" fill="#f0365c"/><rect x="4.45" y="2.8" width="1.1" height="3" fill="#fff"/><rect x="4.45" y="6.5" width="1.1" height="1.1" fill="#fff"/></svg>
<div class="a atl" style="left:24.7px;top:140.4px">Portal Auth Failure</div>
<div class="a alk" style="left:95.7px;width:200px;text-align:right;top:140.4px">Unnamed site&gt;<svg style="display:inline-block;vertical-align:-0.5px;margin:0 1.5px 0 2px" width="8" height="7" viewBox="0 0 8 7"><path d="M0 3.5H7M4 0.6L7 3.5L4 6.4" stroke="#2a86f5" stroke-width="1.3" fill="none"/></svg>-</div>
<div class="a atx" style="left:24.7px;top:154.7px;font-size:10.4px">d0:37:45:b2:27:fe: Portal Timeout (Client Connection)</div>
<div class="a atx" style="left:24.7px;top:169.4px;font-size:10.38px">Captive Portal No Authentication for more than 15 minutes.</div>
<div class="a atx" style="left:24.7px;top:184.0px;font-size:10.03px">, 28 minutes ago @ SSID Portal</div>
<svg class="a" style="left:10px;top:210.4px" width="10" height="9" viewBox="0 0 10 9"><path d="M5 0.3Q5.5 0.3 5.8 0.9L9.7 7.6Q10 8.6 9 8.7H1Q0 8.6 0.3 7.6L4.2 0.9Q4.5 0.3 5 0.3Z" fill="#f0365c"/><rect x="4.45" y="2.8" width="1.1" height="3" fill="#fff"/><rect x="4.45" y="6.5" width="1.1" height="1.1" fill="#fff"/></svg>
<div class="a atl" style="left:24.7px;top:208.0px">Portal Auth Timeout</div>
<div class="a alk" style="left:273.9px;width:200px;text-align:right;top:208.0px">Unnamed site&gt;<svg style="display:inline-block;vertical-align:-0.5px;margin:0 1.5px 0 2px" width="8" height="7" viewBox="0 0 8 7"><path d="M0 3.5H7M4 0.6L7 3.5L4 6.4" stroke="#2a86f5" stroke-width="1.3" fill="none"/></svg>-</div>
<div class="a atx" style="left:24.7px;top:222.5px;font-size:10.4px">d0:37:45:b2:27:fe: Captive Portal No Authentication for more than 15 minutes. (Client Connection)</div>
<div class="a atx" style="left:24.7px;top:237.2px;font-size:10.2px">-</div>
<div class="a atx" style="left:24.7px;top:252.5px;font-size:10.03px">, 28 minutes ago @ SSID Portal</div>
<svg class="a" style="left:10px;top:279.0px" width="10" height="9" viewBox="0 0 10 9"><path d="M5 0.3Q5.5 0.3 5.8 0.9L9.7 7.6Q10 8.6 9 8.7H1Q0 8.6 0.3 7.6L4.2 0.9Q4.5 0.3 5 0.3Z" fill="#f0365c"/><rect x="4.45" y="2.8" width="1.1" height="3" fill="#fff"/><rect x="4.45" y="6.5" width="1.1" height="1.1" fill="#fff"/></svg>
<div class="a atl" style="left:24.7px;top:276.6px">Portal Auth Failure</div>
<div class="a alk" style="left:95.7px;width:200px;text-align:right;top:276.6px">Unnamed site&gt;<svg style="display:inline-block;vertical-align:-0.5px;margin:0 1.5px 0 2px" width="8" height="7" viewBox="0 0 8 7"><path d="M0 3.5H7M4 0.6L7 3.5L4 6.4" stroke="#2a86f5" stroke-width="1.3" fill="none"/></svg>-</div>
<div class="a atx" style="left:24.7px;top:290.9px;font-size:10.4px">d0:37:45:b2:27:fe: Portal Timeout (Client Connection)</div>
<div class="a atx" style="left:24.7px;top:305.6px;font-size:10.38px">Captive Portal No Authentication for more than 15 minutes.</div>
<div class="a atx" style="left:24.7px;top:320.2px;font-size:10.03px">, 43 minutes ago @ SSID Portal</div>
<svg class="a" style="left:10px;top:347.6px" width="10" height="9" viewBox="0 0 10 9"><path d="M5 0.3Q5.5 0.3 5.8 0.9L9.7 7.6Q10 8.6 9 8.7H1Q0 8.6 0.3 7.6L4.2 0.9Q4.5 0.3 5 0.3Z" fill="#f0365c"/><rect x="4.45" y="2.8" width="1.1" height="3" fill="#fff"/><rect x="4.45" y="6.5" width="1.1" height="1.1" fill="#fff"/></svg>
<div class="a atl" style="left:24.7px;top:345.2px">Portal Auth Timeout</div>
<div class="a alk" style="left:273.9px;width:200px;text-align:right;top:345.2px">Unnamed site&gt;<svg style="display:inline-block;vertical-align:-0.5px;margin:0 1.5px 0 2px" width="8" height="7" viewBox="0 0 8 7"><path d="M0 3.5H7M4 0.6L7 3.5L4 6.4" stroke="#2a86f5" stroke-width="1.3" fill="none"/></svg>-</div>
<div class="a atx" style="left:24.7px;top:359.7px;font-size:10.4px">d0:37:45:b2:27:fe: Captive Portal No Authentication for more than 15 minutes. (Client Connection)</div>
</div>
<svg class="a" style="left:1645px;top:141px" width="11" height="9" viewBox="0 0 11 9"><path d="M5.5 1.2L9.6 7.6H1.4Z" fill="#b4b5ba" stroke="#b4b5ba" stroke-width="1.3" stroke-linejoin="round"/></svg>
<div class="a" style="left:1646px;top:155px;width:9px;height:137px;border-radius:4.5px;background:#b4b5ba"></div>
<svg class="a" style="left:1645px;top:505px" width="11" height="9" viewBox="0 0 11 9"><path d="M5.5 7.8L9.6 1.4H1.4Z" fill="#b4b5ba" stroke="#b4b5ba" stroke-width="1.3" stroke-linejoin="round"/></svg>
<svg class="a" style="left:1141px;top:519px" width="9" height="11" viewBox="0 0 9 11"><path d="M1.6 5.5L7.8 1.4V9.6Z" fill="#b4b5ba" stroke="#b4b5ba" stroke-width="1.2" stroke-linejoin="round"/></svg>
<svg class="a" style="left:1630px;top:519px" width="9" height="11" viewBox="0 0 9 11"><path d="M7.4 5.5L1.2 1.4V9.6Z" fill="#b4b5ba" stroke="#b4b5ba" stroke-width="1.2" stroke-linejoin="round"/></svg>
<div class="a atx" style="left:1138px;top:531.5px;font-size:10.15px">Showing 14 - 14</div>
<div class="card rc" style="left:1127px;top:563px;width:540px;height:270px"></div>
<div class="a" style="left:1128px;top:596px;width:538px;height:1px;background:#eceef1"></div>
<div class="a rct" style="left:1138px;top:571.5px">Network Events</div>
<div class="a" style="left:1128px;top:598px;width:510px;height:222px;overflow:hidden">
<svg class="a" style="left:10px;top:9.1px" width="10" height="10" viewBox="0 0 10 10"><circle cx="5" cy="5" r="5" fill="#22c55e"/><rect x="4.4" y="4.2" width="1.2" height="3.6" fill="#fff"/><rect x="4.4" y="2.3" width="1.2" height="1.2" fill="#fff"/></svg>
<div class="a atl" style="left:24.7px;top:8.1px;font-size:10.4px">QoE Analytics&gt;portal.http-redirect&gt;DC:08:56:34:7C:20</div>
<div class="a atx" style="left:24.7px;top:23.2px;font-size:10.18px">Portal Http Redirect for station mac d0:37:45:b2:27:fe ip 172.16.101.177 on ssid Portal</div>
<div class="a atx" style="left:24.7px;top:38.1px;font-size:10.13px">172.16.101.57, a minute ago @ Group user, module eag_app, uptime 88665, uptime 88665, priority 4,</div>
<div class="a atx" style="left:24.7px;top:51.8px;font-size:10.2px">session</div>
<svg class="a" style="left:10px;top:77.9px" width="10" height="10" viewBox="0 0 10 10"><circle cx="5" cy="5" r="5" fill="#22c55e"/><rect x="4.4" y="4.2" width="1.2" height="3.6" fill="#fff"/><rect x="4.4" y="2.3" width="1.2" height="1.2" fill="#fff"/></svg>
<div class="a atl" style="left:24.7px;top:76.9px;font-size:10.4px">QoE Analytics&gt;portal.http-redirect&gt;DC:08:56:34:7C:20</div>
<div class="a atx" style="left:24.7px;top:92.0px;font-size:10.18px">Portal Http Redirect for station mac d0:37:45:b2:27:fe ip 172.16.101.177 on ssid Portal</div>
<div class="a atx" style="left:24.7px;top:106.9px;font-size:10.08px">172.16.101.57, 2 minutes ago @ Group user, module eag_app, uptime 88607, uptime 88607, priority 4,</div>
<div class="a atx" style="left:24.7px;top:120.6px;font-size:10.2px">session</div>
<svg class="a" style="left:10px;top:146.2px" width="10" height="10" viewBox="0 0 10 10"><circle cx="5" cy="5" r="5" fill="#22c55e"/><rect x="4.4" y="4.2" width="1.2" height="3.6" fill="#fff"/><rect x="4.4" y="2.3" width="1.2" height="1.2" fill="#fff"/></svg>
<div class="a atl" style="left:24.7px;top:145.2px;font-size:10.4px">QoE Analytics&gt;portal.http-request&gt;DC:08:56:34:7C:20</div>
<div class="a atx" style="left:24.7px;top:160.3px;font-size:10.18px">Portal Http Request for station mac d0:37:45:b2:27:fe ip 172.16.101.177 on ssid Portal</div>
<div class="a atx" style="left:24.7px;top:175.2px;font-size:10.08px">172.16.101.57, 2 minutes ago @ Group user, module eag_app, uptime 88607, uptime 88607, priority 4,</div>
<div class="a atx" style="left:24.7px;top:188.9px;font-size:10.2px">session</div>
<svg class="a" style="left:10px;top:213.4px" width="10" height="10" viewBox="0 0 10 10"><circle cx="5" cy="5" r="5" fill="#22c55e"/><rect x="4.4" y="4.2" width="1.2" height="3.6" fill="#fff"/><rect x="4.4" y="2.3" width="1.2" height="1.2" fill="#fff"/></svg>
<div class="a atl" style="left:24.7px;top:212.4px;font-size:10.4px">QoE Analytics&gt;portal.http-redirect&gt;DC:08:56:34:7C:20</div>
<div class="a atx" style="left:24.7px;top:227.5px;font-size:10.18px">Portal Http Redirect for station mac d0:37:45:b2:27:fe ip 172.16.101.177 on ssid Portal</div>
</div>
<div class="a alk" style="left:1578px;top:606.1px;height:14.0px;overflow:hidden">Unnamed site</div>
<div class="a alk" style="left:1578px;top:674.9px;height:14.0px;overflow:hidden">Unnamed site</div>
<div class="a alk" style="left:1578px;top:743.2px;height:14.0px;overflow:hidden">Unnamed site</div>
<div class="a alk" style="left:1578px;top:810.4px;height:9.6px;overflow:hidden">Unnamed site</div>
<svg class="a" style="left:1645px;top:606px" width="11" height="9" viewBox="0 0 11 9"><path d="M5.5 1.2L9.6 7.6H1.4Z" fill="#b4b5ba" stroke="#b4b5ba" stroke-width="1.3" stroke-linejoin="round"/></svg>
<div class="a" style="left:1646px;top:620px;width:9px;height:17px;border-radius:4.5px;background:#b4b5ba"></div>
</body></html>
